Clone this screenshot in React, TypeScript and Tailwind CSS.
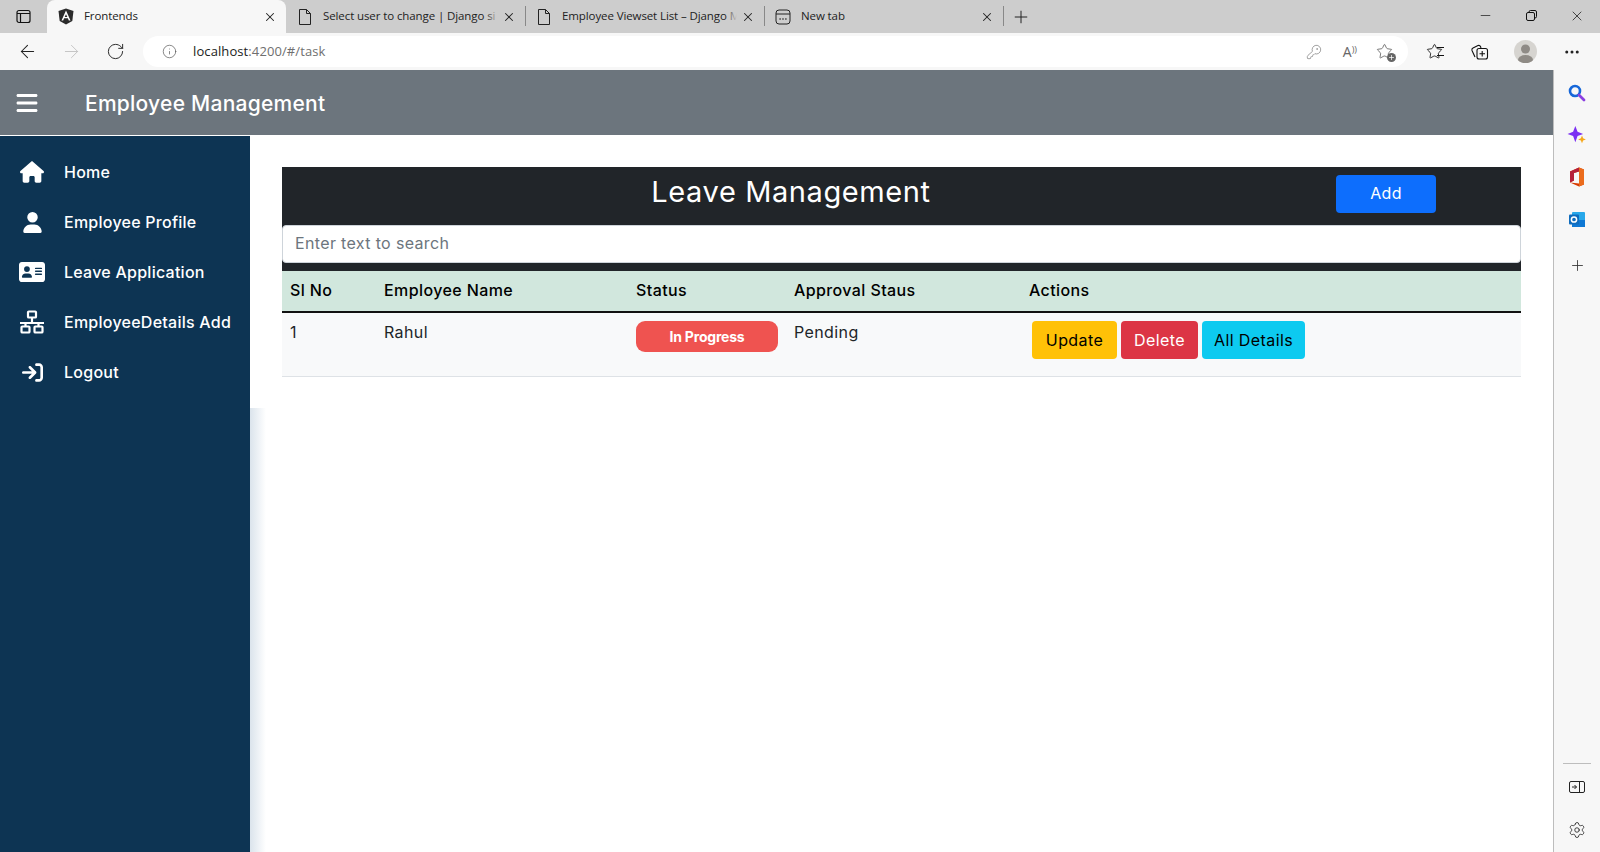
import { ReactNode } from 'react';
import { FaBars, FaHouse, FaUser, FaAddressCard, FaArrowRightToBracket } from 'react-icons/fa6';
import { ArrowLeft, ArrowRight, RotateCw, Info, KeyRound, Star, X, Plus, Minus, Settings, MoreHorizontal } from 'lucide-react';

const PageIcon = () => (
  <svg width="18" height="18" viewBox="0 0 18 18" fill="none" stroke="#222" strokeWidth="1">
    <path d="M3.500 1.500h7l4 4v11h-11z" strokeLinejoin="round" />
    <path d="M10.500 1.500v4h4" />
  </svg>
);

const NewTabIcon = () => (
  <svg width="18" height="18" viewBox="0 0 18 18" fill="none" stroke="#222" strokeWidth="1">
    <rect x="2" y="2" width="14" height="14" rx="3" />
    <path d="M2 6h14" />
    <path d="M5.500 11h1.200M8.400 11h1.200M11.300 11h1.200" strokeWidth="1.500" />
  </svg>
);

const AngularLogo = () => (
  <svg width="16" height="17" viewBox="0 0 16 17">
    <path d="M8 0.500 15.500 3l-1.200 10L8 16.500 1.700 13 .5 3z" fill="#2b2b2b" />
    <path d="M8 2.500 3.500 12.500h1.700l.9-2.300h3.800l.9 2.300h1.700zM8 6.300l1.300 2.600H6.700z" fill="#fff" fillRule="evenodd" />
  </svg>
);

const LanIcon = () => (
  <svg width="26" height="24" viewBox="0 0 26 24" fill="none" stroke="#fff" strokeWidth="2.200">
    <rect x="9" y="1.500" width="8" height="6" rx="0.800" />
    <path d="M13 7.500v5.500M1 13h24M6.500 13v3.500M19.500 13v3.500" />
    <rect x="2.500" y="16.500" width="8" height="6" rx="0.800" />
    <rect x="15.500" y="16.500" width="8" height="6" rx="0.800" />
  </svg>
);

const Tab = ({ icon, title, active, sep }: { icon: ReactNode; title: string; active?: boolean; sep?: boolean }) => (
  <div className={`relative flex h-full w-[239px] shrink-0 items-center pr-[9px] ${active ? 'rounded-t-lg bg-[#f7f7f7] pl-[11px]' : 'pl-[10px]'}`}>
    {icon}
    <span className={`relative flex-1 overflow-hidden whitespace-nowrap pb-[2px] text-[11.500px] tracking-[-0.1px] text-[#222] ${active ? 'ml-[10px]' : 'ml-[9px]'}`}>
      {title}
      {!active && <span className="absolute inset-y-0 right-0 w-[12px] bg-gradient-to-r from-transparent to-[#cdcdcd]" />}
    </span>
    <X size={14} strokeWidth={1.800} className="ml-1 shrink-0 text-[#222]" />
    {sep && <div className="absolute -right-px top-[6px] h-[20px] w-px bg-[#888]" />}
  </div>
);

const NavItem = ({ icon, label }: { icon: ReactNode; label: string }) => (
  <div className="flex h-[50px] items-center">
    <div className="flex w-[65px] shrink-0 justify-center pr-px">{icon}</div>
    <span className="-ml-px text-[16px] font-medium tracking-[0.25px] text-white">{label}</span>
  </div>
);

const SearchLogo = () => (
  <svg width="18" height="18" viewBox="0 0 18 18" fill="none">
    <circle cx="7" cy="7" r="5" stroke="#1667d9" strokeWidth="2.600" />
    <path d="M11 11l5 5" stroke="#8a3fe0" strokeWidth="2.800" strokeLinecap="round" />
  </svg>
);

const SparkleLogo = () => (
  <svg width="20" height="20" viewBox="0 0 18 18">
    <path d="M7.500 1 9.500 6 14.500 8 9.500 10 7.500 15.500 5.500 10 .5 8 5.500 6z" fill="#7b2ff2" />
    <path d="M13.500 9.500 14.500 12 17 13 14.500 14 13.500 16.500 12.500 14 10 13 12.500 12z" fill="#f6a81c" />
  </svg>
);

const OfficeLogo = () => (
  <svg width="16" height="20" viewBox="0 0 16 20">
    <path d="M1 4.500 10 .5 15 2.500V17.500L10 19.500 1 15.500 10 16.500V4.500L5 6V13.500L1 15.500z" fill="#d83b01" />
    <path d="M1 4.500 10 .5V4.500L5 6V13.500L1 15.500z" fill="#b5203a" />
    <path d="M10 .5 15 2.500V17.500L10 19.500z" fill="#eb6c1d" />
  </svg>
);

const OutlookLogo = () => (
  <svg width="17" height="17" viewBox="0 0 17 17">
    <rect x="3" y="1" width="13" height="15" rx="1" fill="#28a8ea" />
    <path d="M3 9 16 9V16H3z" fill="#0f78d4" />
    <rect x="0" y="3.500" width="10" height="10" rx="1" fill="#0f6cbd" />
    <circle cx="5" cy="8.500" r="2.600" fill="none" stroke="#fff" strokeWidth="1.500" />
  </svg>
);

const EdgePanel = () => (
  <div className="flex w-[47px] shrink-0 flex-col items-center border-l border-[#bdbdbd] bg-[#f7f7f7] pt-[2px]">
    <div className="flex h-[42px] items-center justify-center"><SearchLogo /></div>
    <div className="flex h-[42px] items-center justify-center"><SparkleLogo /></div>
    <div className="flex h-[42px] items-center justify-center"><OfficeLogo /></div>
    <div className="flex h-[42px] items-center justify-center"><OutlookLogo /></div>
    <div className="mt-[4px] flex h-[42px] items-center justify-center"><Plus size={17} strokeWidth={1.200} className="text-[#333]" /></div>
    <div className="mt-auto h-px w-[28px] bg-[#bdbdbd]" />
    <div className="flex h-[46px] items-center justify-center">
      <svg width="16" height="14" viewBox="0 0 16 14" fill="none" stroke="#222">
        <rect x="0.500" y="1.500" width="15" height="11" rx="1.500" />
        <path d="M10.500 1.500v11" />
        <path d="M3 7h4.500M5.500 5l2 2-2 2" />
      </svg>
    </div>
    <div className="flex h-[42px] items-center justify-center pb-[2px]"><Settings size={18} strokeWidth={1.100} className="text-[#222]" /></div>
  </div>
);

function App() {
  return (
    <div className="flex h-[852px] w-[1600px] flex-col overflow-hidden bg-white font-['Inter',sans-serif]">
      {/* browser tab strip */}
      <div className="flex h-[33px] shrink-0 items-end bg-[#cdcdcd] font-['Open_Sans',sans-serif]">
        <div className="flex h-full w-[47px] shrink-0 items-center justify-center">
          <svg width="15" height="15" viewBox="0 0 15 15" fill="none" stroke="#111" strokeWidth="1.200">
            <rect x="1" y="1.500" width="13" height="12" rx="2" />
            <path d="M1 4.500h13M4.500 4.500v9" />
          </svg>
        </div>
        <Tab icon={<AngularLogo />} title="Frontends" active />
        <Tab icon={<PageIcon />} title="Select user to change | Django si" sep />
        <Tab icon={<PageIcon />} title="Employee Viewset List – Django M" sep />
        <Tab icon={<NewTabIcon />} title="New tab" sep />
        <div className="flex h-full w-[36px] items-center justify-center"><Plus size={20} strokeWidth={1.200} className="text-[#222]" /></div>
        <div className="ml-auto flex h-full items-center pb-[2px]">
          <div className="flex w-[46px] justify-center"><Minus size={15} strokeWidth={1.100} className="text-[#111]" /></div>
          <div className="flex w-[46px] justify-center">
            <svg width="11" height="11" viewBox="0 0 11 11" fill="none" stroke="#111">
              <rect x="0.500" y="2.500" width="8" height="8" rx="1.500" />
              <path d="M3 2.500V2a1.500 1.500 0 0 1 1.500-1.500H9A1.500 1.500 0 0 1 10.500 2v4.500A1.500 1.500 0 0 1 9 8h-.5" />
            </svg>
          </div>
          <div className="flex w-[46px] justify-center"><X size={16} strokeWidth={1.100} className="text-[#111]" /></div>
        </div>
      </div>

      {/* browser toolbar */}
      <div className="flex h-[37px] shrink-0 items-center bg-[#f7f7f7] font-['Open_Sans',sans-serif]">
        <div className="flex w-[55px] justify-center"><ArrowLeft size={21} strokeWidth={1.200} className="text-[#222]" /></div>
        <div className="flex w-[33px] justify-center"><ArrowRight size={21} strokeWidth={1.100} className="text-[#c4c4c4]" /></div>
        <div className="flex w-[55px] justify-center"><RotateCw size={19} strokeWidth={1.200} className="text-[#222]" /></div>
        <div className="flex h-[31px] w-[1265px] shrink-0 items-center rounded-full bg-white pl-[19px] pr-[15px]">
          <Info size={15} strokeWidth={1.100} className="text-[#555]" />
          <span className="ml-[16px] text-[13px] tracking-[0.1px] text-[#222]">localhost<span className="text-[#6f6f6f]">:4200/#/task</span></span>
          <div className="ml-auto flex items-center gap-[19px]">
            <KeyRound size={16} strokeWidth={1.200} className="mr-[2px] text-[#8a8a8a]" />
            <span className="text-[14px] leading-none text-[#666]">A<span className="align-top text-[9px]">))</span></span>
            <div className="relative">
              <Star size={17} strokeWidth={1.100} className="text-[#555]" />
              <div className="absolute -bottom-[2px] -right-[3px] flex h-[9px] w-[9px] items-center justify-center rounded-full bg-[#666]">
                <Plus size={7} strokeWidth={2.500} className="text-white" />
              </div>
            </div>
          </div>
        </div>
        <div className="relative ml-[18px] flex w-[20px] items-center">
          <Star size={17} strokeWidth={1.200} className="text-[#111]" />
          <div className="absolute left-[11px] top-[4px] h-[9px] w-[7px] border-y border-[#111]" />
        </div>
        <div className="ml-[24px] flex w-[20px] items-center">
          <svg width="19" height="19" viewBox="0 0 19 19" fill="none" stroke="#111" strokeWidth="1.100">
            <path d="M5 15 2 8.500a2 2 0 0 1 1-2.500L8 3.500a2 2 0 0 1 2.500 1L11 6" />
            <rect x="7" y="6.500" width="10.500" height="10.500" rx="2" />
            <path d="M12.200 9v5.500M9.500 11.700h5.500" />
          </svg>
        </div>
        <div className="ml-[24px] flex h-[23px] w-[23px] items-center justify-center overflow-hidden rounded-full bg-[#d6d4d0]">
          <svg width="23" height="23" viewBox="0 0 23 23" fill="#8f8b86">
            <circle cx="11.500" cy="9" r="4.500" />
            <ellipse cx="11.500" cy="20" rx="7.500" ry="5" />
          </svg>
        </div>
        <div className="ml-[25px] flex w-[20px] justify-center"><MoreHorizontal size={18} strokeWidth={2} className="text-[#222]" /></div>
      </div>

      <div className="flex min-h-0 flex-1">
        {/* app */}
        <div className="flex min-w-0 flex-1 flex-col">
          <header className="flex h-[65px] shrink-0 items-center bg-[#6c757d] pl-[15px]">
            <FaBars size={24} className="text-white" />
            <span className="ml-[46px] pt-[2px] text-[21px] font-medium tracking-[0.25px] text-white">Employee Management</span>
          </header>
          <div className="mt-px flex min-h-0 flex-1">
            <aside className="w-[250px] shrink-0 bg-[#0d3453] pt-[11px]">
              <NavItem icon={<FaHouse size={24} className="text-white" />} label="Home" />
              <NavItem icon={<FaUser size={21} className="text-white" />} label="Employee Profile" />
              <NavItem icon={<FaAddressCard size={26} className="text-white" />} label="Leave Application" />
              <NavItem icon={<LanIcon />} label="EmployeeDetails Add" />
              <NavItem icon={<FaArrowRightToBracket size={21} className="text-white" />} label="Logout" />
            </aside>
            <div className="mt-[272px] w-[16px] shrink-0 bg-gradient-to-r from-[#dbe4ec] to-white" />
            <main className="min-w-0 flex-1 pl-[16px] pr-[32px] pt-[31px]">
              <div className="bg-[#212529]">
                <div className="flex h-[58px] items-start">
                  <h3 className="mt-[5px] w-[1018px] text-center text-[29px] font-normal leading-[40px] tracking-[0.6px] text-white">Leave Management</h3>
                  <button className="ml-[36px] mt-[8px] h-[38px] w-[100px] rounded-[4px] bg-[#0d6efd] pb-[3px] text-[16px] tracking-[0.3px] text-white">Add</button>
                </div>
                <input
                  readOnly
                  placeholder="Enter text to search"
                  className="block h-[38px] w-full rounded-[4px] border border-[#ced4da] bg-white px-3 pb-[2px] text-[16px] tracking-[0.35px] placeholder:text-[#6c757d]"
                />
                <div className="h-[8px]" />
              </div>
              <table className="w-full table-fixed border-collapse text-[16px] tracking-[0.4px] text-[#212529]">
                <colgroup>
                  <col className="w-[94px]" />
                  <col className="w-[252px]" />
                  <col className="w-[158px]" />
                  <col className="w-[235px]" />
                  <col />
                </colgroup>
                <thead>
                  <tr className="h-[41px] border-b-2 border-[#111] bg-[#d1e7dd] text-left text-black">
                    <th className="px-2 pb-[3px] font-medium">Sl No</th>
                    <th className="px-2 pb-[3px] font-medium">Employee Name</th>
                    <th className="px-2 pb-[3px] font-medium">Status</th>
                    <th className="px-2 pb-[3px] font-medium">Approval Staus</th>
                    <th className="px-2 pb-[3px] font-medium">Actions</th>
                  </tr>
                </thead>
                <tbody>
                  <tr className="h-[64px] border-b border-[#dee2e6] bg-[#f8f9fa] align-top">
                    <td className="px-2 pt-[7px]">1</td>
                    <td className="px-2 pt-[7px]">Rahul</td>
                    <td className="px-2 pt-2">
                      <div className="flex h-[31px] w-[142px] items-center justify-center rounded-[9px] bg-[#ef5350] pb-px text-[14px] font-bold tracking-[-0.2px] text-white">In Progress</div>
                    </td>
                    <td className="px-2 pt-[7px]">Pending</td>
                    <td className="px-2 pt-2">
                      <div className="ml-[3px] flex gap-1">
                        <button className="h-[38px] w-[85px] rounded-[4px] bg-[#ffc107] pb-px text-black">Update</button>
                        <button className="h-[38px] w-[77px] rounded-[4px] bg-[#dc3545] pb-px text-white">Delete</button>
                        <button className="h-[38px] w-[103px] rounded-[4px] bg-[#0dcaf0] pb-px text-black">All Details</button>
                      </div>
                    </td>
                  </tr>
                </tbody>
              </table>
            </main>
          </div>
        </div>
        <EdgePanel />
      </div>
    </div>
  );
}

export default App;
